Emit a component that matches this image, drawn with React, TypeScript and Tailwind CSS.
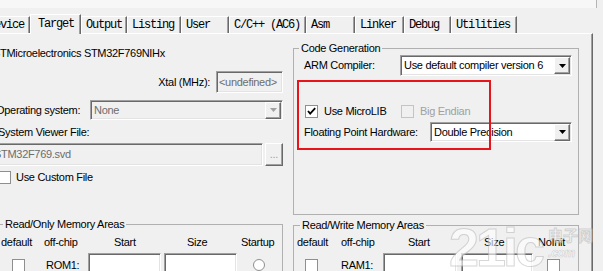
import React from 'react';

const sunken =
  'border border-t-[#a0a0a0] border-l-[#a0a0a0] border-r-white border-b-white shadow-[inset_1px_1px_0_#696969,inset_-1px_-1px_0_#e3e3e3]';

function Checkbox({ checked, disabled }: { checked?: boolean; disabled?: boolean }) {
  return (
    <span
      className={`flex h-[13px] w-[13px] shrink-0 items-center justify-center border ${
        disabled ? 'border-[#c4c4c4] bg-[#f0f0f0]' : 'border-[#8e8f8f] bg-white'
      }`}
    >
      {checked && (
        <svg width="11" height="11" viewBox="0 0 11 11">
          <path d="M2 5 L4.2 7.6 L9.2 2.2" stroke="#000" strokeWidth="1.8" fill="none" />
        </svg>
      )}
    </span>
  );
}

function Radio() {
  return <span className="block h-[12px] w-[12px] shrink-0 rounded-full border border-[#8e8f8f] bg-white" />;
}

function Select({ value, disabled, cls }: { value: string; disabled?: boolean; cls: string }) {
  return (
    <div
      className={`flex shrink-0 items-center ${cls} ${sunken} ${
        disabled ? 'bg-[#f0f0f0] text-[#6d6d6d]' : 'bg-white text-black'
      }`}
    >
      <span className="flex-1 truncate pl-[3px] leading-[13px]">{value}</span>
      <span className="mr-[1px] flex h-[17px] w-[16px] items-center justify-center border border-t-white border-l-white border-r-[#696969] border-b-[#696969] bg-[#f0f0f0] shadow-[inset_-1px_-1px_0_#a0a0a0]">
        <svg width="7" height="4" viewBox="0 0 7 4">
          <path d="M0 0h7L3.5 4z" fill={disabled ? '#a0a0a0' : '#000'} />
        </svg>
      </span>
    </div>
  );
}

const tabs: { label: string; cls: string; active?: boolean }[] = [
  { label: 'Device', cls: 'w-[47px]' },
  { label: 'Target', cls: 'w-[51px]', active: true },
  { label: 'Output', cls: 'w-[46px]' },
  { label: 'Listing', cls: 'w-[54px]' },
  { label: 'User', cls: 'w-[48px]' },
  { label: 'C/C++ (AC6)', cls: 'w-[77px]' },
  { label: 'Asm', cls: 'w-[49px]' },
  { label: 'Linker', cls: 'w-[49px]' },
  { label: 'Debug', cls: 'w-[47px]' },
  { label: 'Utilities', cls: 'w-[66px]' },
];

export default function App() {
  return (
    <div className="relative h-[271px] w-[603px] overflow-hidden bg-[#f0f0f0] font-['Liberation_Sans',Arial,sans-serif] text-[11px] tracking-[-0.3px] text-black">
      <div className="h-[8px] w-[597px] border-r border-[#b4b4b4] bg-[#f7f7f7]" />

      {/* tab strip */}
      <div className="-ml-[17px] flex h-[25px] items-end font-['Liberation_Mono',monospace] text-[12px] tracking-[-1.2px]">
        {tabs.map((t) =>
          t.active ? (
            <div
              key={t.label}
              className={`relative z-10 -mb-[1px] flex h-[20px] shrink-0 items-center border-t border-l border-white border-r border-r-[#696969] bg-[#f0f0f0] pl-[7px] pb-[2px] shadow-[inset_-1px_0_0_#a0a0a0] ${t.cls}`}
            >
              {t.label}
            </div>
          ) : (
            <div
              key={t.label}
              className={`flex h-[17px] shrink-0 items-center whitespace-nowrap border-t border-l border-white border-r border-r-[#696969] pl-[4px] shadow-[inset_-1px_0_0_#a0a0a0] ${t.cls}`}
            >
              {t.label}
            </div>
          )
        )}
      </div>

      {/* panel */}
      <div className="-ml-[20px] h-[238px] w-[613px] border-t border-r border-t-white border-r-[#696969] shadow-[inset_-1px_0_0_#a0a0a0]">
        {/* top section */}
        <div className="flex h-[180px] items-start">
          {/* left column */}
          <div className="flex w-[303px] shrink-0 flex-col">
            <div className="mt-[13px] h-[13px] whitespace-nowrap pl-[13px] leading-[13px]">
              STMicroelectronics STM32F769NIHx
            </div>
            <div className="mt-[11px] flex h-[22px] items-center justify-end">
              <span className="mr-[6px] leading-[13px]">Xtal (MHz):</span>
              <div className={`flex h-[22px] w-[67px] items-center bg-[#f0f0f0] pl-[2px] text-[#6d6d6d] ${sunken}`}>
                &lt;undefined&gt;
              </div>
            </div>
            <div className="mt-[7px] flex h-[20px] items-center">
              <span className="flex-1 whitespace-nowrap pl-[16px] leading-[13px]">Operating system:</span>
              <Select value="None" disabled cls="h-[20px] w-[193px]" />
            </div>
            <div className="mt-[6px] h-[13px] whitespace-nowrap pl-[18px] leading-[13px]">System Viewer File:</div>
            <div className="mt-[4px] flex h-[23px]">
              <div className={`ml-[10px] flex flex-1 items-center bg-[#f0f0f0] pl-[3px] text-[#6d6d6d] ${sunken}`}>
                STM32F769.svd
              </div>
              <div className="ml-[2px] flex w-[18px] items-center justify-center border border-t-white border-l-white border-r-[#696969] border-b-[#696969] bg-[#f0f0f0] text-[#a0a0a0] shadow-[inset_-1px_-1px_0_#a0a0a0]">
                ...
              </div>
            </div>
            <div className="mt-[5px] flex h-[13px] items-center gap-[5px] pl-[18px]">
              <Checkbox />
              <span className="leading-[13px]">Use Custom File</span>
            </div>
          </div>

          {/* code generation */}
          <fieldset className="ml-[10px] mt-[8px] h-[173px] w-[286px] shrink-0 border border-[#b0b0b0]">
            <legend className="ml-[5px] px-[2px] leading-[12px]">Code Generation</legend>
            <div className="mt-[1px] flex h-[21px] items-center pl-[10px]">
              <span className="w-[96px] leading-[13px]">ARM Compiler:</span>
              <Select value="Use default compiler version 6" cls="h-[21px] w-[172px]" />
            </div>
            <div className="mt-[29px] flex h-[13px] items-center pl-[11px]">
              <div className="flex w-[96px] items-center gap-[6px]">
                <Checkbox checked />
                <span className="leading-[13px]">Use MicroLIB</span>
              </div>
              <div className="flex items-center gap-[6px]">
                <Checkbox disabled />
                <span className="leading-[13px] text-[#a0a0a0]">Big Endian</span>
              </div>
            </div>
            <div className="mt-[4px] flex h-[20px] items-center pl-[10px]">
              <span className="w-[126px] whitespace-nowrap leading-[13px]">Floating Point Hardware:</span>
              <Select value="Double Precision" cls="h-[20px] w-[142px]" />
            </div>
          </fieldset>
        </div>

        {/* memory areas */}
        <div className="mt-[4px] flex items-start">
          <fieldset className="ml-[12px] h-[70px] w-[291px] shrink-0 border border-[#b0b0b0]">
            <legend className="ml-[10px] px-[2px] leading-[12px]">Read/Only Memory Areas</legend>
            <div className="mt-[6px] flex h-[13px] items-center pl-[8px] leading-[13px]">
              <span className="w-[43px]">default</span>
              <span className="w-[70px]">off-chip</span>
              <span className="w-[73px]">Start</span>
              <span className="w-[54px]">Size</span>
              <span>Startup</span>
            </div>
            <div className="mt-[4px] flex items-start pl-[8px]">
              <div className="flex w-[43px] pl-[11px] pt-[6px]">
                <Checkbox />
              </div>
              <span className="w-[44px] pl-[2px] pt-[6px] leading-[13px]">ROM1:</span>
              <div className={`h-[22px] w-[73px] bg-white ${sunken}`} />
              <div className={`ml-[3px] h-[22px] w-[73px] bg-white ${sunken}`} />
              <div className="ml-[16px] pt-[6px]">
                <Radio />
              </div>
            </div>
          </fieldset>

          <fieldset className="ml-[10px] mt-[1px] h-[70px] w-[286px] shrink-0 border border-[#b0b0b0]">
            <legend className="ml-[6px] px-[2px] leading-[12px]">Read/Write Memory Areas</legend>
            <div className="mt-[5px] flex h-[13px] items-center pl-[3px] leading-[13px]">
              <span className="w-[44px]">default</span>
              <span className="w-[67px]">off-chip</span>
              <span className="w-[76px]">Start</span>
              <span className="w-[54px]">Size</span>
              <span>NoInit</span>
            </div>
            <div className="mt-[4px] flex items-start pl-[3px]">
              <div className="flex w-[44px] pl-[8px] pt-[6px]">
                <Checkbox />
              </div>
              <span className="w-[42px] pt-[6px] leading-[13px]">RAM1:</span>
              <div className={`h-[22px] w-[74px] bg-white ${sunken}`} />
              <div className={`ml-[4px] h-[22px] w-[72px] bg-white ${sunken}`} />
              <div className="ml-[14px] pt-[6px]">
                <Checkbox />
              </div>
            </div>
          </fieldset>
        </div>
      </div>

      {/* red annotation */}
      <div className="absolute left-[297px] top-[80px] h-[70px] w-[194px] border-2 border-[#e8141c]" />

      {/* watermark */}
      <div className="pointer-events-none absolute left-[449px] top-[220px] flex items-start opacity-60">
        <span className="font-['Liberation_Sans_Narrow','Liberation_Sans',sans-serif] text-[54px] font-bold leading-[54px] tracking-[-3px] text-white [-webkit-text-stroke:1px_#bdbdbd]">
          21ic
        </span>
        <div className="ml-[6px] mt-[5px] flex flex-col">
          <span className="font-['Noto_Sans_CJK_SC',sans-serif] text-[15px] font-bold leading-[20px] tracking-[0px] text-white [-webkit-text-stroke:1px_#bdbdbd]">
            电子网
          </span>
          <span className="mt-[1px] text-[12px] font-bold italic leading-[14px] text-white [-webkit-text-stroke:0.6px_#bdbdbd]">
            .com
          </span>
        </div>
      </div>
    </div>
  );
}
